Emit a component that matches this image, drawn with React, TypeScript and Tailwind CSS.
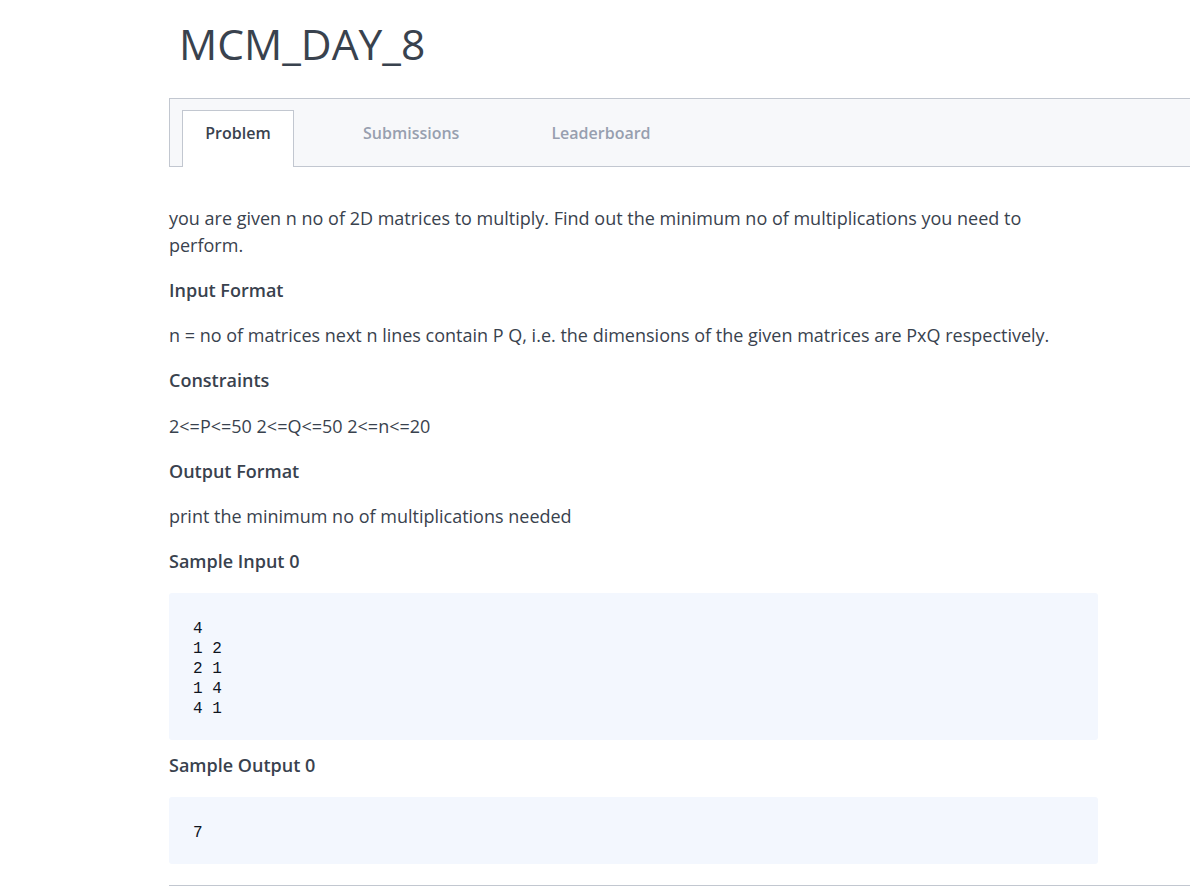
import React from "react";

const font = { fontFamily: '"Open Sans", "Noto Sans", sans-serif' };

function Code({ lines }: { lines: string[] }) {
  return (
    <div className="w-[929px] rounded-[3px] bg-[#f3f7fe] pl-[24px] pt-[26px] pb-[21px]">
      <pre className="m-0 font-['Liberation_Mono',monospace] text-[16px] leading-[20px] text-[#0e141e]">
        {lines.join("\n")}
      </pre>
    </div>
  );
}

export default function App() {
  return (
    <div className="min-h-[887px] w-[1190px] overflow-hidden bg-white text-[#39424e]" style={font}>
      <div className="pl-[169px] pt-[23px]">
        <h1 className="pl-[10px] text-[42.5px] leading-[42px] font-normal">MCM_DAY_8</h1>
        <div className="mt-[33px] flex h-[69px] w-[1100px] items-end border-y border-l border-[#c2c7d0] bg-[#f7f8fa] pl-[12px]">
          <div className="relative -mb-px flex h-[57px] w-[112px] justify-center border-x border-t border-[#c2c7d0] bg-white pt-[12px] text-[16px] font-semibold leading-[20px] text-[#39424e]">
            Problem
          </div>
          <div className="ml-[45px] flex h-[57px] px-[24px] pt-[14px] text-[16px] font-semibold leading-[20px] text-[#979faf]">
            Submissions
          </div>
          <div className="ml-[44px] flex h-[57px] px-[24px] pt-[14px] text-[16px] font-semibold leading-[20px] text-[#979faf]">
            Leaderboard
          </div>
        </div>
        <div className="w-[929px] text-[18px] leading-[27px]">
          <p className="mt-[38px]">
            you are given n no of 2D matrices to multiply. Find out the minimum no of multiplications you need to perform.
          </p>
          <h3 className="mt-[18px] font-semibold">Input Format</h3>
          <p className="mt-[18px]">
            n = no of matrices next n lines contain P Q, i.e. the dimensions of the given matrices are PxQ respectively.
          </p>
          <h3 className="mt-[18px] font-semibold">Constraints</h3>
          <p className="mt-[19px]">2&lt;=P&lt;=50 2&lt;=Q&lt;=50 2&lt;=n&lt;=20</p>
          <h3 className="mt-[18px] font-semibold">Output Format</h3>
          <p className="mt-[18px]">print the minimum no of multiplications needed</p>
          <h3 className="mt-[18px] font-semibold">Sample Input 0</h3>
          <div className="mt-[18px]">
            <Code lines={["4", "1 2", "2 1", "1 4", "4 1"]} />
          </div>
          <h3 className="mt-[12px] font-semibold">Sample Output 0</h3>
          <div className="mt-[18px]">
            <Code lines={["7"]} />
          </div>
        </div>
        <div className="mt-[21px] h-px w-[1100px] bg-[#c2c7d0]" />
      </div>
    </div>
  );
}
